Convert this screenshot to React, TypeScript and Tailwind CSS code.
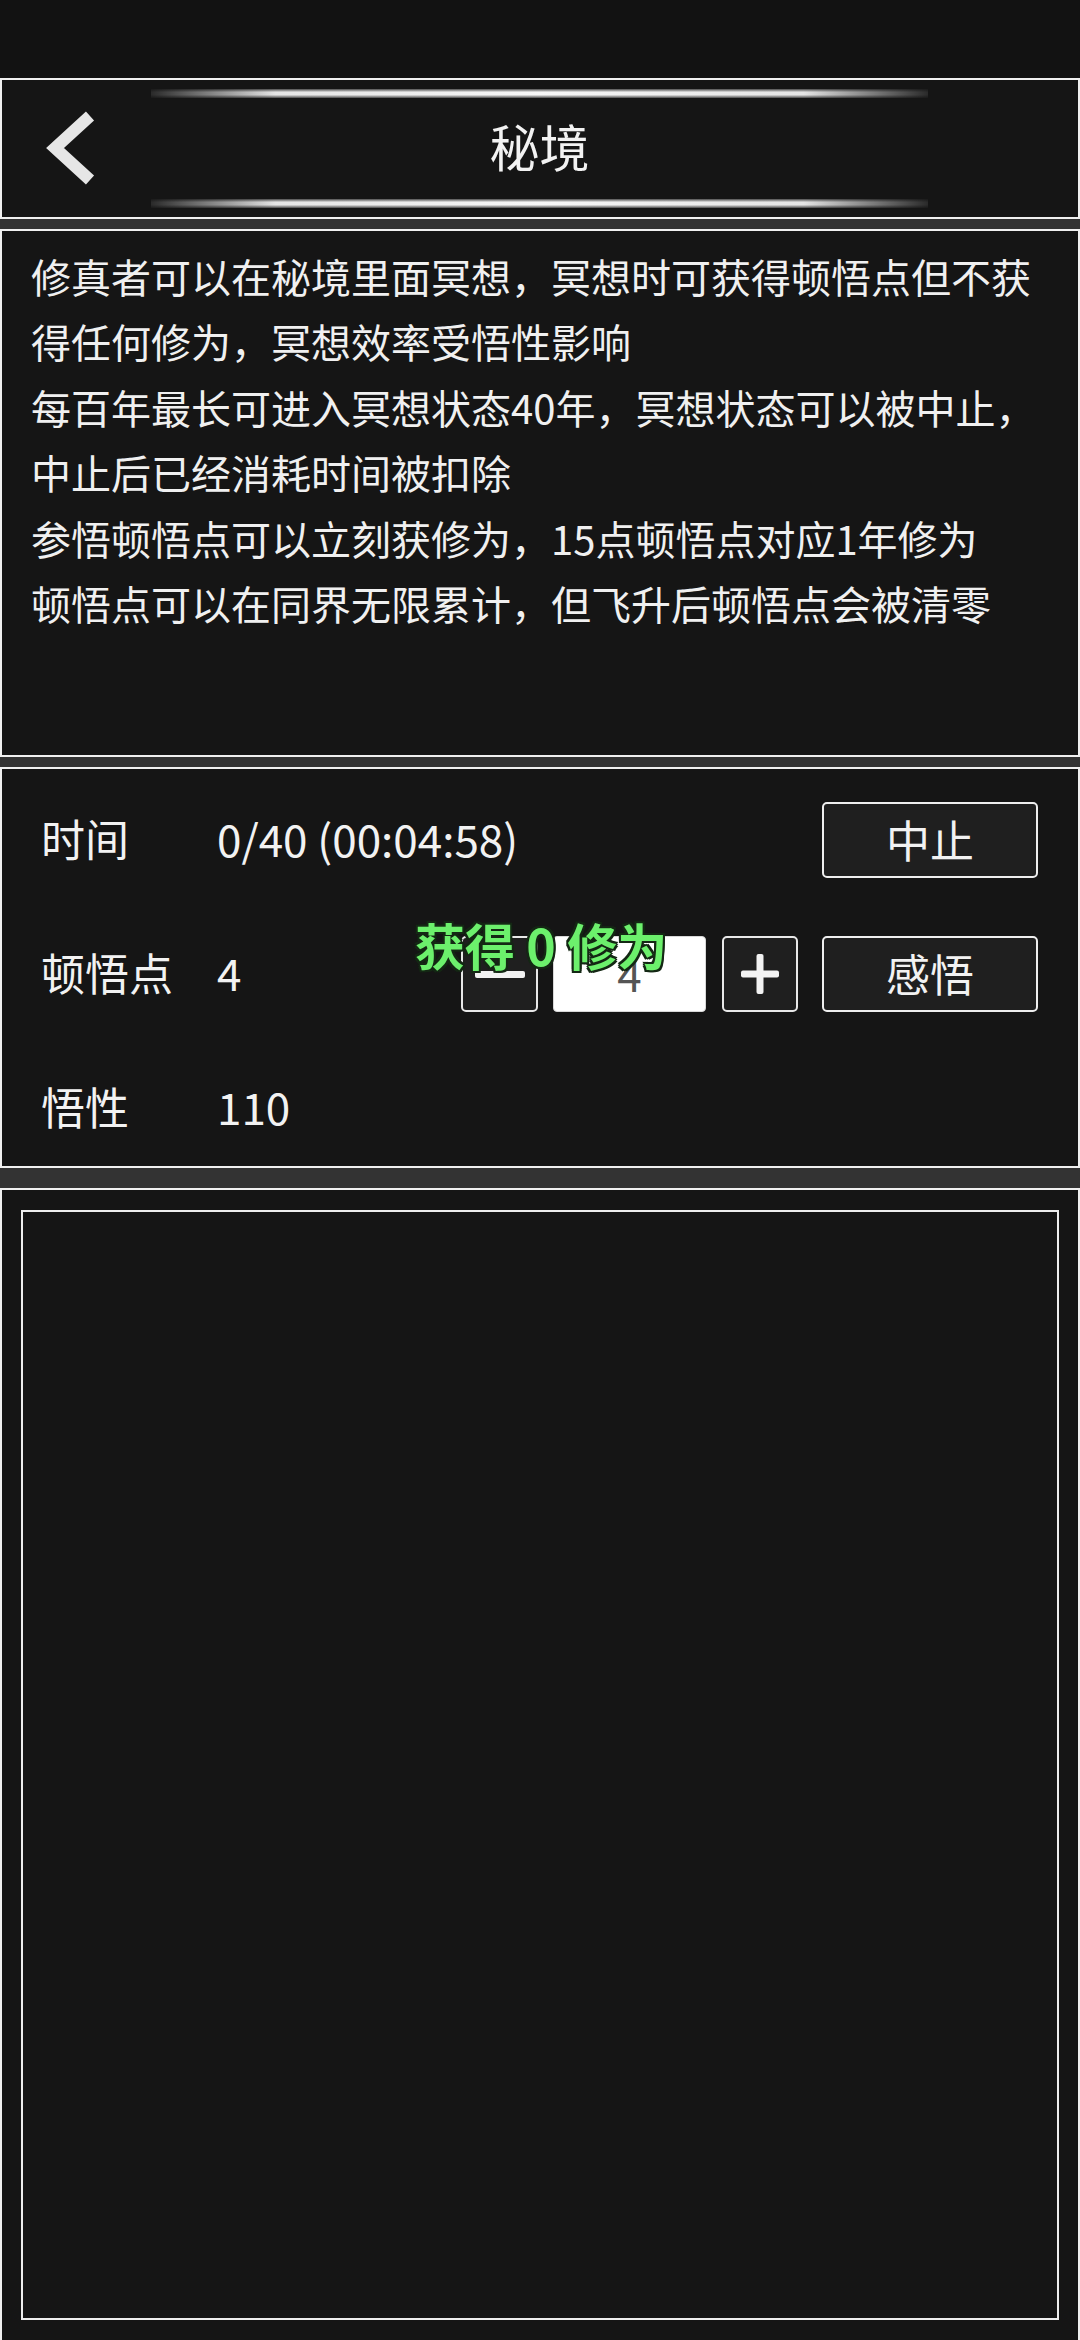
import React from 'react'

const font = "font-['Noto_Sans_CJK_SC','Noto_Sans',sans-serif]"

const notes = [
  '修真者可以在秘境里面冥想，冥想时可获得顿悟点但不获得任何修为，冥想效率受悟性影响',
  '每百年最长可进入冥想状态40年，冥想状态可以被中止，中止后已经消耗时间被扣除',
  '参悟顿悟点可以立刻获修为，15点顿悟点对应1年修为',
  '顿悟点可以在同界无限累计，但飞升后顿悟点会被清零',
]

function GlowLine() {
  return (
    <div className="h-[9px] w-[777px] bg-[linear-gradient(to_bottom,rgba(20,20,20,0.75),rgba(20,20,20,0)_35%,rgba(20,20,20,0)_65%,rgba(20,20,20,0.75)),linear-gradient(to_right,#2a2a2a,#e4e4e4_16%,#f6f6f6_50%,#e4e4e4_84%,#2a2a2a)]" />
  )
}

function Divider({ h }: { h: string }) {
  return <div className={`${h} shrink-0 bg-[#333333]`} />
}

function OutlineButton({ children }: { children: React.ReactNode }) {
  return (
    <button className="flex h-[76px] w-[216px] items-center justify-center rounded-[5px] border-2 border-[#eeeeee] bg-[#1f1f1f] pb-[3px] text-[44px] leading-none text-[#f2f2f2]">
      {children}
    </button>
  )
}

function StatRow({ label, value, children }: { label: string; value: string; children?: React.ReactNode }) {
  return (
    <div className="flex h-[76px] items-center">
      <span className="w-[176px] pb-[5px] text-[44px] leading-none text-[#f2f2f2]">{label}</span>
      <span className="pb-[5px] text-[44px] leading-none text-[#f2f2f2]">{value}</span>
      <div className="ml-auto flex items-center">{children}</div>
    </div>
  )
}

export default function App() {
  return (
    <div className={`flex h-[2340px] w-[1080px] flex-col overflow-hidden bg-[#121212] ${font}`}>
      <div className="h-[78px] shrink-0" />

      {/* title bar */}
      <header className="grid h-[141px] shrink-0 grid-cols-[149px_1fr_150px] border-2 border-[#f0f0f0] bg-[#151515]">
        <div className="flex items-center pl-[38px]">
          <svg width="60" height="80" viewBox="0 0 60 80" fill="none">
            <polyline points="50,7 15,39 50,71" stroke="#e6e6e6" strokeWidth="12" strokeLinecap="butt" strokeLinejoin="miter" />
          </svg>
        </div>
        <div className="flex flex-col items-center pt-[9px] pb-[9px]">
          <GlowLine />
          <div className="flex flex-1 items-center pb-[8px] text-[50px] leading-none text-[#f2f2f2]">秘境</div>
          <GlowLine />
        </div>
        <div />
      </header>

      <Divider h="h-[10px]" />

      {/* rules */}
      <section className="h-[528px] shrink-0 border-2 border-[#f0f0f0] bg-[#151515] pt-[13px] pl-[29px] pr-[40px]">
        {notes.map((t) => (
          <p key={t} className="text-[40px] leading-[65.4px] text-[#f0f0f0]">
            {t}
          </p>
        ))}
      </section>

      <Divider h="h-[10px]" />

      {/* meditation stats */}
      <section className="relative h-[401px] shrink-0 border-2 border-[#f0f0f0] bg-[#151515] pt-[33px] pl-[39px] pr-[40px]">
        <div className="flex flex-col gap-[58px]">
          <StatRow label="时间" value="0/40 (00:04:58)">
            <OutlineButton>中止</OutlineButton>
          </StatRow>
          <StatRow label="顿悟点" value="4">
            <button className="flex h-[76px] w-[77px] items-center justify-center rounded-[5px] border-2 border-[#e8e8e8] bg-[#1f1f1f]">
              <span className="h-[7px] w-[50px] rounded-[2px] bg-[#f2f2f2]" />
            </button>
            <div className="ml-[15px] flex h-[76px] w-[153px] items-center justify-center rounded-[4px] border border-[#d8d8d8] bg-white pb-[3px] text-[44px] leading-none text-[#555555]">
              4
            </div>
            <button className="ml-[16px] flex h-[76px] w-[76px] items-center justify-center rounded-[5px] border-2 border-[#e8e8e8] bg-[#1f1f1f]">
              <svg width="40" height="40" viewBox="0 0 40 40">
                <rect x="1" y="16.5" width="38" height="7" rx="2" fill="#f2f2f2" />
                <rect x="16.5" y="0" width="7" height="40" rx="2" fill="#f2f2f2" />
              </svg>
            </button>
            <div className="ml-[24px]">
              <OutlineButton>感悟</OutlineButton>
            </div>
          </StatRow>
          <StatRow label="悟性" value="110" />
        </div>

        {/* floating gain toast */}
        <span className="absolute left-[413px] top-[150px] text-[50px] font-bold leading-none text-[#6cf06c] [text-shadow:2px_0_0_#142814,-2px_0_0_#142814,0_2px_0_#142814,0_-2px_0_#142814,2px_2px_0_#142814,-2px_-2px_0_#142814,2px_-2px_0_#142814,-2px_2px_0_#142814]">
          获得 0 修为
        </span>
      </section>

      <Divider h="h-[20px]" />

      {/* log area */}
      <section className="flex-1 border-x-2 border-t-2 border-[#f0f0f0] bg-[#151515] px-[19px] pt-[20px]">
        <div className="h-[1110px] border-2 border-[#eeeeee]" />
      </section>
    </div>
  )
}
